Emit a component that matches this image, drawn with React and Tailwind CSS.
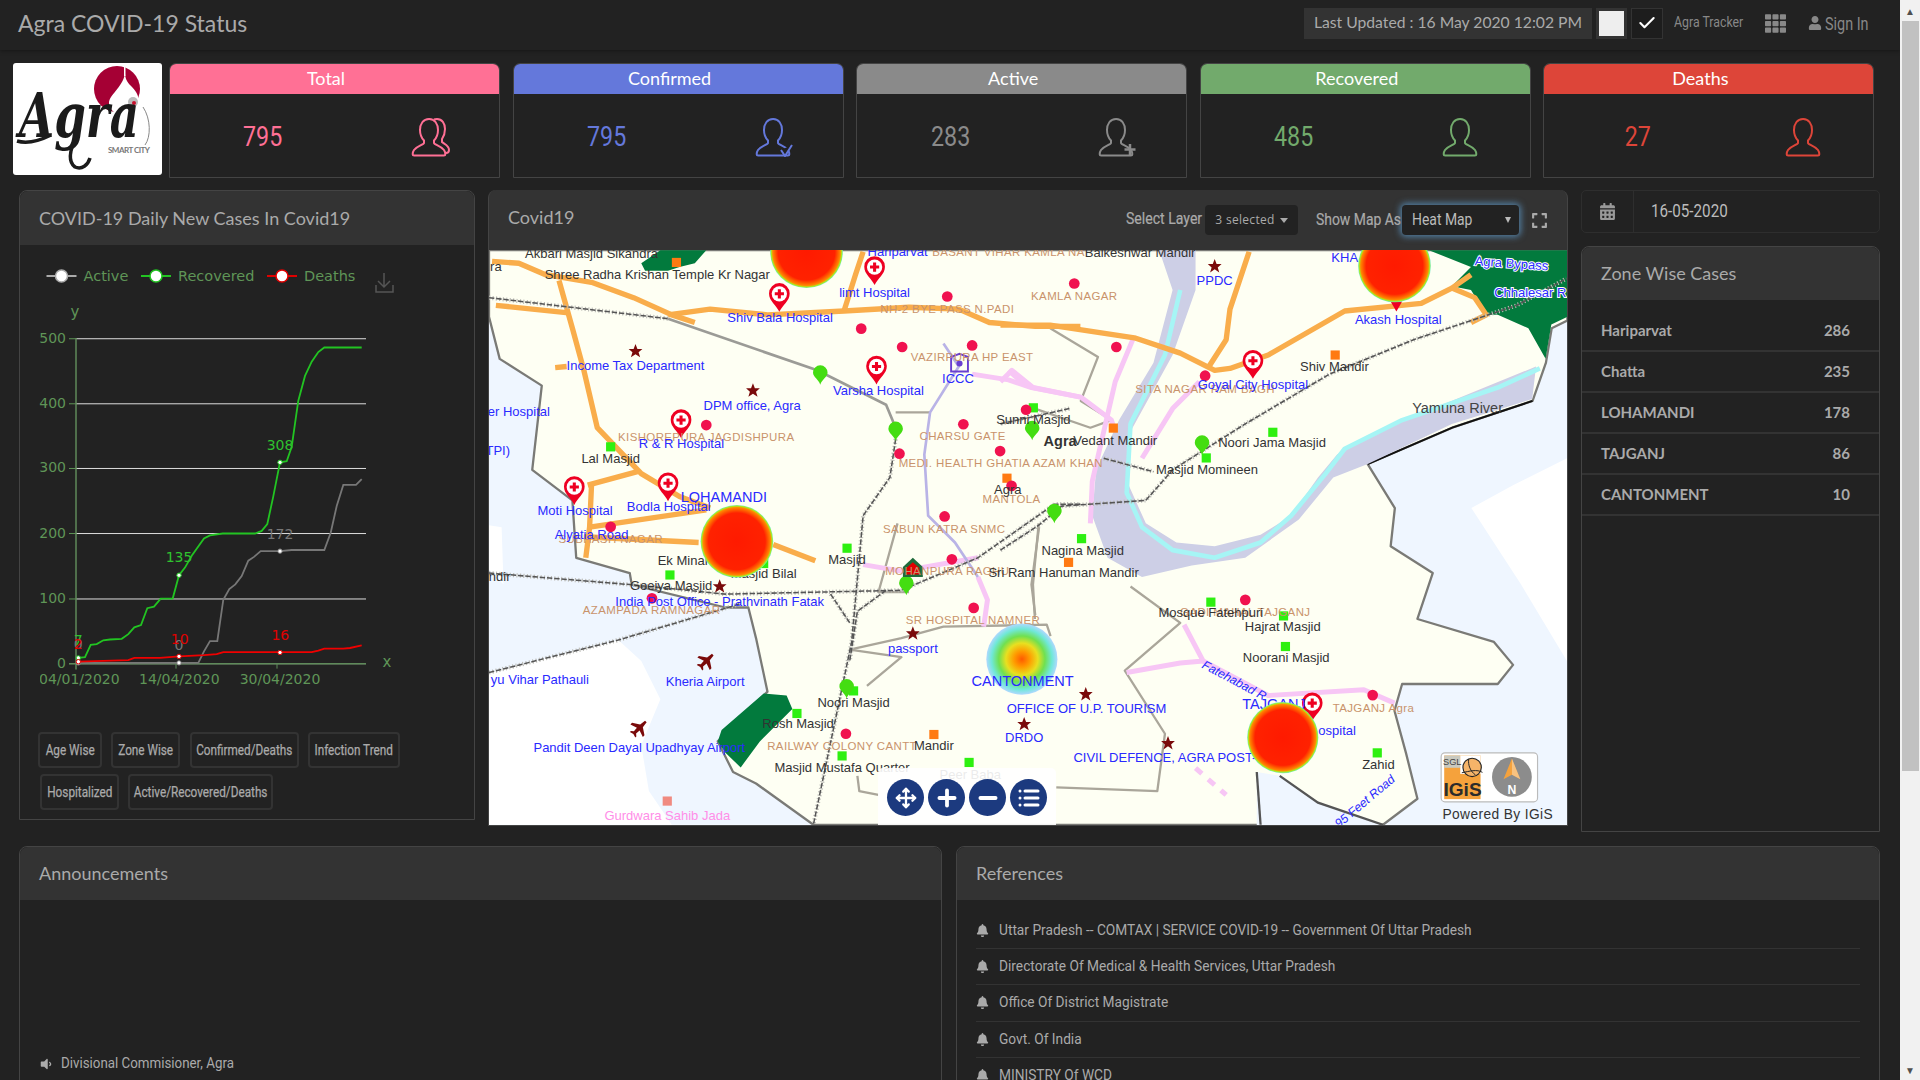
import React from 'react';
import { Move, Plus, Minus, List, Check } from 'lucide-react';
import { FaBell, FaCalendarAlt, FaExpand, FaTh, FaUser, FaVolumeDown } from 'react-icons/fa';

const roboto = "font-['Roboto',sans-serif]";
const lato = "font-['Lato',sans-serif]";

// ---- person icons on the tiles
const BUST = 'M19 2c-5.800 0-9 5-9 11 0 4.500 1.500 8 4 10.500v2.500c0 1.500-7 3-10 7-1 1.500-1.300 3-1.300 4 0 1 .5 1.500 1.500 1.500h29.600c1 0 1.500-.5 1.500-1.500 0-1 -.3-2.500-1.300-4-3-4-10-5.500-10-7v-2.500c2.500-2.500 4-6 4-10.500 0-6-3.200-11-8.800-11z';

const PersonIcon = ({ kind, color }) => (
  <svg width="42" height="40" viewBox="0 0 42 40" fill="none" stroke={color} strokeWidth="2">
    <path d={BUST} fill="#222" />
    {kind === 'total' && <path d="M24 2.500c1-.5 2-.5 3-.5 5 0 8 4.500 8 10 0 4-1 7-3 10v3c2 2 7 3 7 8 0 2-1 3-3 3" />}
    {kind === 'confirmed' && <path d="M27 33l4 6 7-11" stroke={color} fill="#222" />}
    {kind === 'active' && <path d="M33 27v11M27.500 32.500h11" strokeWidth="2.500" />}
  </svg>
);

const tiles = [
  { title: 'Total', value: '795', color: '#ff7095', kind: 'total', bg: 'bg-[#ff7095]', text: 'text-[#ff7095]' },
  { title: 'Confirmed', value: '795', color: '#6478db', kind: 'confirmed', bg: 'bg-[#6478db]', text: 'text-[#6478db]' },
  { title: 'Active', value: '283', color: '#8a8a8a', kind: 'active', bg: 'bg-[#8a8a8a]', text: 'text-[#8a8a8a]' },
  { title: 'Recovered', value: '485', color: '#72aa6c', kind: 'plain', bg: 'bg-[#72aa6c]', text: 'text-[#72aa6c]' },
  { title: 'Deaths', value: '27', color: '#dd4539', kind: 'plain', bg: 'bg-[#dd4539]', text: 'text-[#dd4539]' },
];

const Tile = ({ t }) => (
  <div className="w-[331px] h-[115px] rounded-t-[7px] border border-[#444] overflow-hidden">
    <div className={`${t.bg} ${lato} h-[30px] pr-[17px] text-center text-white text-[18px] leading-[28px]`}>{t.title}</div>
    <div className="flex items-center h-[84px]">
      <div className={`${t.text} ${roboto} w-[186px] text-center text-[28px] pt-[1px]`}>
        <span className="inline-block scale-x-[0.83]">{t.value}</span>
      </div>
      <div className="ml-[54px] mt-[2px]"><PersonIcon kind={t.kind} color={t.color} /></div>
    </div>
  </div>
);

const Logo = () => (
  <div className="w-[149px] h-[112px] rounded-[3px] bg-white overflow-hidden shrink-0">
    <svg width="149" height="112" viewBox="0 0 149 112">
      <circle cx="104" cy="26" r="23" fill="#a50034" />
      <path d="M112 11c.5 6 3 9 7 13 5 5 8 11 6 18-1 4-4 7-6 9h-15c-5-3-8-6-8-11 0-8 13-15 16-29z" fill="#fff" />
      <rect x="111" y="3" width="1.500" height="10" fill="#fff" />
      <circle cx="120" cy="39" r="5" fill="#bbb" />
      <circle cx="121" cy="40" r="2" fill="#c8102e" />
      <path d="M130 44c8 12 8 30 2 38" stroke="#888" fill="none" />
      <text x="6" y="74" fontFamily="'DejaVu Serif',serif" fontStyle="italic" fontWeight="700" fontSize="62" fill="#1b1b1b" textLength="120" lengthAdjust="spacingAndGlyphs">Agra</text>
      <path d="M4 78c10 3 22 0 34-6M64 72c-6 12-10 26-2 32 7 3 13-2 15-9" stroke="#1b1b1b" strokeWidth="3.500" fill="none" />
      <text x="95" y="90" fontFamily="'Lato',sans-serif" fontWeight="700" fontSize="8" fill="#777" textLength="42">SMART CITY</text>
    </svg>
  </div>
);

// ---- chart. points are read in a 3 / 2.613 scaled space, toX/toY bring them into the svg
const toX = (x) => x / 3 - 20;
const toY = (y) => 240 + y / 2.613 - 245;
const line = (pts) => pts.map(([x, y]) => `${toX(x).toFixed(1)},${toY(y).toFixed(1)}`).join(' ');

const greenLine = [[235,1092],[255,1090],[272,1058],[290,1056],[310,1046],[330,1044],[365,1042],[385,1030],[403,1012],[423,1006],[442,962],[462,958],[482,937],[518,937],[537,876],[555,856],[575,825],[612,780],[630,772],[668,767],[765,767],[785,760],[802,742],[820,670],[840,581],[860,578],[875,540],[885,480],[895,420],[915,355],[935,318],[955,293],[973,281],[1085,281]];
const grayLine = [[235,1105],[595,1105],[612,1075],[630,1048],[652,1048],[670,940],[688,912],[706,900],[725,878],[745,838],[762,828],[782,813],[840,813],[875,810],[973,810],[992,765],[1010,695],[1030,640],[1068,640],[1085,625]];
const redLine = [[235,1102],[385,1098],[403,1092],[480,1092],[537,1088],[612,1085],[650,1082],[670,1077],[935,1077],[955,1073],[973,1068],[1030,1068],[1050,1066],[1085,1059]];

const grid = [[500, 258], [400, 428], [300, 597], [200, 767], [100, 938], [0, 1107]];

const chartLabels = [
  ['7', 235, 1058, '#2fc22f'], ['0', 235, 1070, '#777'], ['2', 235, 1070, '#e00000'],
  ['135', 537, 842, '#2fc22f'], ['0', 537, 1072, '#777'], ['10', 539, 1056, '#e00000'],
  ['308', 840, 549, '#2fc22f'], ['172', 840, 780, '#777'], ['16', 841, 1046, '#e00000'],
];

const markers = [
  [235, 1092, '#22c422'], [537, 876, '#22c422'], [840, 581, '#22c422'],
  [235, 1105, '#777'], [537, 1105, '#777'], [840, 813, '#777'],
  [235, 1102, '#e00000'], [537, 1088, '#e00000'], [840, 1078, '#e00000'],
];

const LegendItem = ({ x, label, color }) => (
  <g>
    <line x1={x - 15} x2={x + 15} y1="31" y2="31" stroke={color} strokeWidth="2" />
    <circle cx={x} cy="31" r="6" fill="#fff" stroke={color} strokeWidth="1.500" />
    <text x={x + 22} y="36" fill="#5f9557" fontSize="14.500">{label}</text>
  </g>
);

const Chart = () => (
  <svg width="453" height="478" viewBox="0 0 453 478" fontFamily="'DejaVu Sans',sans-serif" className="block">
    <defs>
      <clipPath id="axisClip"><rect x="20" y="400" width="420" height="60" /></clipPath>
    </defs>
    <LegendItem x={41.500} label="Active" color="#aaa" />
    <LegendItem x={136} label="Recovered" color="#22c422" />
    <LegendItem x={262} label="Deaths" color="#e00000" />
    <path d="M364 28v14M358 36l6 6 6-6M356 40v7h17v-7" stroke="#555" strokeWidth="1.500" fill="none" />
    <text x="55" y="72" fill="#5f9557" fontSize="15" textAnchor="middle">y</text>
    {grid.map(([v, y]) => (
      <g key={v}>
        <line x1="56" x2="346" y1={toY(y)} y2={toY(y)} stroke="#ddd" strokeWidth="1" />
        <line x1="49" x2="56" y1={toY(y)} y2={toY(y)} stroke="#5f9557" />
        <text x="46" y={toY(y) + 4} fill="#5f9557" fontSize="14" textAnchor="end">{v}</text>
      </g>
    ))}
    <line x1="56" x2="56" y1={toY(256)} y2={toY(1122)} stroke="#5f8a5a" strokeWidth="1.500" />
    <line x1="49" x2="346" y1={toY(1107)} y2={toY(1107)} stroke="#5f8a5a" strokeWidth="1.500" />
    <line x1="156" x2="156" y1={toY(1107)} y2={toY(1120)} stroke="#5f8a5a" />
    <line x1="257" x2="257" y1={toY(1107)} y2={toY(1120)} stroke="#5f8a5a" />
    <g clipPath="url(#axisClip)" fill="#5f9557" fontSize="14" textAnchor="middle">
      <text x={toX(238)} y={toY(1160)}>04/01/2020</text>
      <text x={toX(538)} y={toY(1160)}>14/04/2020</text>
      <text x={toX(840)} y={toY(1160)}>30/04/2020</text>
    </g>
    <text x="367" y={toY(1116)} fill="#5f9557" fontSize="15" textAnchor="middle">x</text>
    <polyline points={line(grayLine)} fill="none" stroke="#777" strokeWidth="1.800" />
    <polyline points={line(greenLine)} fill="none" stroke="#22c422" strokeWidth="1.800" />
    <polyline points={line(redLine)} fill="none" stroke="#f00000" strokeWidth="1.800" />
    {markers.map(([x, y, c], i) => (
      <circle key={i} cx={toX(x)} cy={toY(y)} r="2.200" fill="#fff" stroke={c} strokeWidth="1" />
    ))}
    {chartLabels.map(([t, x, y, c], i) => (
      <text key={i} x={toX(x)} y={toY(y)} fill={c} fontSize="14" textAnchor="middle">{t}</text>
    ))}
  </svg>
);

const ChartButton = ({ className, children }) => (
  <div className={`${className} ${roboto} h-[36px] flex items-center justify-center rounded-[4px] border-2 border-[#333] text-[14px] text-[#aaa] [-webkit-text-stroke:0.25px_#aaa]`}>
    <span className="inline-block whitespace-nowrap scale-x-[0.84]">{children}</span>
  </div>
);

// ---- map, everything in it is in a space 2.613 times the page
const roadsLeft = [
  '30,55 100,60 170,90 290,110 400,150 500,195 560,215',
  '40,170 230,190',
  '205,105 240,230 270,340 305,490 420,610 520,670 600,700',
  '490,195 600,180 750,195 950,185 1120,175 1250,180 1330,215 1450,225 1568,225',
  '950,185 980,90 1000,30',
  '280,640 410,605',
  '290,640 285,750 275,830',
  '285,750 590,705',
  '270,775 570,790',
  '765,795 875,838',
  '195,333 225,330',
];
const roadsRight = [
  '0,222 130,222 350,255 470,295 560,340 600,335 700,300 900,185 1100,165 1180,125 1230,90',
  '1180,125 1240,150 1270,195 1230,215',
  '650,30 600,180 590,260 545,330',
];
const pinkLeft = [
  '1285,350 1380,365 1440,385 1568,410',
  '1380,340 1420,375',
  '1000,848 1100,865 1300,830',
  '1300,880 1325,940 1315,1010',
];
const pinkRight = [
  '0,370 30,340 85,385 210,410 290,470 300,500',
  '370,570 450,440 520,370',
  '350,250 300,370 240,630 235,740',
  '480,1005 530,1100 470,1105 330,1130',
  '530,1100 700,1190 950,1175 1030,1210',
];
const grayLeft = [
  '965,1070 1100,1040 1210,1010 1480,1005 1490,1035',
  '1085,450 1175,450',
  '1460,750 1440,900 1450,980',
  '965,1070 1100,1090 1010,1165',
  '1120,920 1040,920 1090,740',
  '985,1400 990,1440 1040,1450',
];
const grayRight = [
  '130,230 255,305 210,420 290,470 235,490 90,440',
  '340,905 470,1000 325,1125 430,1290 410,1440 146,1430',
  '100,740 85,900 90,990',
];
const railLeft = [
  '22,150 490,205',
  '22,870 390,900 640,925 1100,915 1300,830 1500,690 1568,690',
  '1085,520 1070,620 1000,720 970,1050 870,1528',
  '22,1130 360,1045 680,950',
  '915,925 965,1000',
  '1060,915 985,970 965,1100',
];
const railRight = [
  '0,810 100,745 160,695 380,680 450,600 640,480 860,350 1080,260 1350,170 1480,100',
  '180,440 0,480',
  '270,570 400,605',
];

const blueLeft = [
  ['limt Hospital', 1030, 149], ['Shiv Bala Hospital', 783, 214], ['Income Tax Department', 405, 339], ['DPM office, Agra', 710, 443],
  ['Varsha Hospital', 1040, 404], ['ICCC', 1248, 374], ['R & R Hospital', 525, 544], ['er Hospital', 100, 460], ['TPI)', 45, 561],
  ['Moti Hospital', 247, 718], ['Bodla Hospital', 492, 708], ['Alyatia Road', 290, 781], ['India Post Office - Prathvinath Fatak', 625, 956],
  ['yu Vihar Pathauli', 155, 1161], ['Kheria Airport', 587, 1166], ['Pandit Deen Dayal Upadhyay Airport', 415, 1339], ['passport', 1130, 1078],
  ['DRDO', 1421, 1312], ['Hariparvat', 1090, 41],
];
const blueRight = [
  ['PPDC', 560, 116], ['Akash Hospital', 1040, 218], ['Goyal City Hospital', 660, 388],
  ['OFFICE OF U.P. TOURISM', 225, 1237], ['CIVIL DEFENCE, AGRA POST-', 430, 1365], ['ospital', 880, 1293], ['KHA', 900, 56],
];
const darkLeft = [
  ['Akbari Masjid Sikandra', 290, 46], ['Shree Radha Krishan Temple Kr Nagar', 462, 100], ['Lal Masjid', 340, 581], ['Ek Minar', 530, 849],
  ['Masjid Bilal', 740, 884], ['Goeiya Masjid', 498, 914], ['Masjid', 958, 845], ['Noori Masjid', 975, 1221], ['Rosh Masjid', 830, 1276],
  ['Masjid Mustafa Quarter', 945, 1391], ['Mandir', 1185, 1333], ['Sunni Masjid', 1445, 479], ['Agra', 1378, 663], ['ndir', 50, 891], ['ra', 40, 81],
];
const darkRight = [
  ['Nagina Masjid', 215, 823], ['Sri Ram Hanuman Mandir', 165, 881], ['Vedant Mandir', 300, 534], ['Noori Jama Masjid', 710, 541],
  ['Masjid Momineen', 540, 610], ['Shiv Mandir', 873, 341], ['Mosque Fatehpuri', 550, 986], ['Hajrat Masjid', 738, 1022],
  ['Noorani Masjid', 747, 1103], ['Zahid', 988, 1381], ['Baikeshwar Mandir', 365, 43],
];
const brownLeft = [
  ['BASANT VIHAR KAMLA NA', 1380, 41], ['NH-2 BYE PASS N.PADI', 1220, 189], ['VAZIRPURA HP  EAST', 1285, 316], ['KISHOREPURA JAGDISHPURA', 590, 525],
  ['CHARSU GATE', 1260, 523], ['MEDI. HEALTH GHATIA AZAM KHAN', 1360, 594], ['MANTOLA', 1388, 686], ['SABUN  KATRA SNMC', 1212, 764],
  ['MOHANPURA RAGHU', 1220, 876], ['SR HOSPITAL NAMNER', 1287, 1003], ['AZAMPADA RAMNAGAR', 447, 976], ['SUBHASH NAGAR', 340, 791],
  ['RAILWAY COLONY CANTT', 945, 1333],
];
const brownRight = [
  ['KAMLA NAGAR', 193, 157], ['SITA NAGAR RAM BAGH', 535, 398], ['GADI MAHAL TAJGANJ', 640, 983], ['TAJGANJ Agra', 975, 1233],
];

const circlesLeft = [[1220,147],[1552,113],[995,231],[1102,279],[1285,275],[590,483],[1262,481],[1426,443],[1095,558],[1358,551],[1388,642],[1213,722],[340,749],[1232,834],[448,936],[1289,961],[955,1290]];
const circlesRight = [[303,279],[535,354],[640,940],[973,1189]];
const greenSquares = [[340,540],[495,875],[958,805],[740,845],[827,1237],[945,1348],[1277,1365],[975,1178],[1445,438],[1571,780],[2071,502],[1897,569],[1909,946],[2099,982],[2104,1062],[2344,1340]];
const orangeSquares = [[512,58],[1376,622],[1185,1292],[1537,842],[2234,300],[1654,491]];
const greenPins = [[888,350],[1085,497],[1442,495],[1500,712],[1113,900],[957,1170],[1886,533]];
const stars = [[405,290],[712,393],[625,905],[1130,1028],[1421,1265],[1919,68],[1582,1187],[1797,1315]];
const hospitalPins = [[1030,75],[781,145],[1035,335],[524,475],[490,640],[245,650],[2019,320],[2174,1215]];

const Lines = ({ items, stroke, width, dash }) => items.map((p, i) => (
  <polyline key={i} points={p} fill="none" stroke={stroke} strokeWidth={width} strokeDasharray={dash} strokeLinejoin="round" />
));

const Labels = ({ items, fill, size, spacing }) => items.map(([t, x, y]) => (
  <text key={t} x={x} y={y} fill={fill} fontSize={size} textAnchor="middle" letterSpacing={spacing}>{t}</text>
));

const HospitalPin = ({ x, y }) => (
  <g transform={`translate(${x} ${y})`}>
    <path d="M0 42C-8 24-27 14-27-6a27 27 0 0 1 54 0C27 14 8 24 0 42z" fill="#ee0022" />
    <circle r="20" cy="-5" fill="#fff" />
    <path d="M-4-17h8v8h8v8h-8v8h-8v-8h-8v-8h8z" fill="#ee0022" />
  </g>
);

const Heat = ({ x, y, r = 95 }) => <circle cx={x} cy={y} r={r} fill="url(#hotSpot)" />;

const MapCanvas = () => (
  <svg width="1078" height="575" viewBox="22 26 2818 1502" fontFamily="'Liberation Sans',sans-serif" className="block">
    <defs>
      <radialGradient id="hotSpot">
        <stop offset="0%" stopColor="#ff1a00" />
        <stop offset="78%" stopColor="#ff2200" />
        <stop offset="93%" stopColor="#ff8800" />
        <stop offset="97%" stopColor="#a8ee20" />
        <stop offset="100%" stopColor="#70e8c0" />
      </radialGradient>
      <radialGradient id="coolSpot">
        <stop offset="0%" stopColor="#ff5a00" />
        <stop offset="22%" stopColor="#ff9a00" />
        <stop offset="45%" stopColor="#e8e020" />
        <stop offset="65%" stopColor="#70e050" />
        <stop offset="85%" stopColor="#70e8d8" />
        <stop offset="100%" stopColor="#b0d8ff" />
      </radialGradient>
    </defs>

    {/* outside the district */}
    <rect x="22" y="26" width="2818" height="1502" fill="#eff6ff" />
    <polygon points="22,745 55,750 60,900 22,860" fill="#fff" />
    <polygon points="22,1130 360,1045 420,1100 470,1200 420,1320 440,1440 500,1528 22,1528" fill="#fff" />
    <polygon points="2590,700 2700,640 2840,570 2840,1100 2720,900" fill="#fff" />

    {/* district land */}
    <polygon
      fill="#fefff3"
      stroke="#7a7a76"
      strokeWidth="6"
      strokeLinejoin="round"
      points="22,26 2841,26 2841,210 2800,230 2785,320 2750,420 2540,490 2319,585 2390,700 2379,800 2489,870 2449,990 2649,1050 2699,1110 2659,1160 2409,1160 2389,1230 2419,1340 2449,1460 2359,1528 870,1528 720,1420 660,1390 620,1310 750,1180 720,1040 700,960 640,960 395,900 390,870 250,830 240,680 135,600 160,380 50,310 22,200"
    />
    <polygon points="2029,1390 2089,1400 2189,1470 2359,1530 2029,1530" fill="#eff6ff" />
    <polyline points="2029,1390 2039,1528" fill="none" stroke="#555" strokeWidth="6" />
    <polyline points="2089,1400 2189,1470 2359,1528" fill="none" stroke="#555" strokeWidth="6" />
    <polyline points="2319,585 2540,490 2750,420" fill="none" stroke="#111" strokeWidth="5" />

    {/* river and forest */}
    <polygon fill="#cdcfe6" points="1774,26 1869,26 1869,130 1809,300 1699,500 1694,640 1739,740 1819,790 1919,800 2039,770 2119,720 2189,620 2239,560 2319,510 2759,330 2749,415 2539,480 2319,585 2229,620 2139,730 1999,830 1859,850 1729,880 1639,830 1599,720 1609,600 1669,470 1759,320 1809,130" />
    <polyline points="1829,130 1789,300 1699,480 1689,660 1729,750 1809,810 1919,830 2039,790 2119,720 2209,610 2259,545 2409,470 2659,385 2769,335" fill="none" stroke="#a6f5f5" strokeWidth="12" strokeLinejoin="round" />
    <polygon fill="#027a3d" points="420,60 470,26 590,26 560,60 520,70 490,80 430,80" />
    <polygon fill="#027a3d" points="630,1280 740,1185 800,1190 815,1225 730,1310 680,1378 640,1340 620,1310" />
    <polygon fill="#027a3d" points="2479,26 2841,26 2841,200 2799,220 2784,310 2739,230 2659,195 2629,195 2589,130 2539,120 2589,70" />

    {/* roads */}
    <Lines items={grayLeft} stroke="#aaa69a" width="6" />
    <g transform="translate(1359 0)"><Lines items={grayRight} stroke="#aaa69a" width="6" /></g>
    <Lines items={pinkLeft} stroke="#f7c6f5" width="13" />
    <g transform="translate(1359 0)">
      <Lines items={pinkRight} stroke="#f7c6f5" width="13" />
      <polyline points="510,1380 590,1450" fill="none" stroke="#f7c6f5" strokeWidth="13" strokeDasharray="22 22" />
    </g>
    <Lines items={roadsLeft} stroke="#f9ad4b" width="14" />
    <g transform="translate(1359 0)"><Lines items={roadsRight} stroke="#f9ad4b" width="14" /></g>
    <polyline points="1210,270 1250,330 1175,450 1160,560 1170,720 1240,790 1300,880" fill="none" stroke="#b9b3e6" strokeWidth="7" />
    <polyline points="490,205 880,340 1060,430 1085,490" fill="none" stroke="#9b9b96" strokeWidth="7" />
    <Lines items={railLeft} stroke="#bdbdb8" width="11" dash="3 6" />
    <g transform="translate(1359 0)"><Lines items={railRight} stroke="#bdbdb8" width="11" dash="3 6" /></g>
    <Lines items={railLeft} stroke="#555" width="4" dash="14 5" />
    <g transform="translate(1359 0)"><Lines items={railRight} stroke="#555" width="4" dash="14 5" /></g>

    {/* point markers */}
    {greenSquares.map(([x, y], i) => <rect key={i} x={x - 12} y={y - 12} width="24" height="24" fill="#2ef010" />)}
    {orangeSquares.map(([x, y], i) => <rect key={i} x={x - 12} y={y - 12} width="24" height="24" fill="#ff7a12" />)}
    <rect x="476" y="1454" width="24" height="24" fill="#f08a80" />
    {circlesLeft.map(([x, y], i) => <circle key={i} cx={x} cy={y} r="14" fill="#f0124f" />)}
    {circlesRight.map(([x, y], i) => <circle key={i} cx={x + 1359} cy={y} r="14" fill="#f0124f" />)}
    {greenPins.map(([x, y], i) => (
      <path key={i} transform={`translate(${x} ${y})`} d="M0 28C-4 14-19 8-19-4a19 19 0 0 1 38 0C19 8 4 14 0 28z" fill="#44dd11" />
    ))}
    {stars.map(([x, y], i) => (
      <polygon key={i} transform={`translate(${x} ${y})`} points="0,-19 5,-6 18,-6 8,3 12,16 0,8 -12,16 -8,3 -18,-6 -5,-6" fill="#7a0a0a" />
    ))}
    {[[590, 1100], [415, 1275]].map(([x, y], i) => (
      <path key={i} transform={`translate(${x} ${y}) rotate(45)`} d="M-3-24h6l2 16 18 12v6l-18-6-1 12 6 5v4l-10-3-10 3v-4l6-5-1-12-18 6v-6l18-12z" fill="#7a0a0a" />
    ))}
    <path d="M1130 830l26 24v26h-52v-26z" fill="#1f6b3a" />
    <path d="M1130 842l17 15v17h-34v-17z" fill="#e00000" />
    <path d="M1230 305l22-8 22 8v38h-44z" fill="none" stroke="#6a3fd0" strokeWidth="5" />
    <circle cx="1252" cy="322" r="8" fill="#6a3fd0" />
    <path d="M2379 160h30l-15 26z" fill="#ee0022" />
    {hospitalPins.map(([x, y], i) => <HospitalPin key={i} x={x} y={y} />)}

    {/* labels */}
    <Labels items={brownLeft} fill="#c9936b" size="30" spacing="1" />
    <g transform="translate(1359 0)"><Labels items={brownRight} fill="#c9936b" size="30" spacing="1" /></g>
    <Labels items={darkLeft} fill="#333" size="34" />
    <g transform="translate(1359 0)"><Labels items={darkRight} fill="#333" size="34" /></g>
    <text x="1515" y="538" fill="#333" fontSize="38" fontWeight="700" textAnchor="middle">Agra</text>
    <text x="2554" y="452" fill="#444" fontSize="38" textAnchor="middle">Yamuna River</text>
    <text x="1280" y="1408" fill="#333" fontSize="34" textAnchor="middle">Peer Baba</text>
    <Heat x={852} y={30} />
    <Heat x={670} y={787} />
    <Heat x={2389} y={67} />
    <circle cx="1415" cy="1095" r="93" fill="url(#coolSpot)" />
    <Labels items={blueLeft} fill="#2a2aff" size="34" />
    <g transform="translate(1359 0)"><Labels items={blueRight} fill="#2a2aff" size="34" /></g>
    <text x="636" y="685" fill="#2a2aff" fontSize="38" textAnchor="middle">LOHAMANDI</text>
    <text x="1417" y="1164" fill="#2a2aff" fontSize="38" textAnchor="middle">CANTONMENT</text>
    <text x="2074" y="1226" fill="#2a2aff" fontSize="38" textAnchor="middle">TAJGANJ</text>
    <text x="488" y="1515" fill="#ff8ee8" fontSize="34" textAnchor="middle">Gurdwara Sahib Jada</text>
    <text fill="#2a2aff" fontSize="32" fontStyle="italic" textAnchor="middle" transform="translate(1965 1160) rotate(28)">Fatehabad R</text>
    <text fill="#2a2aff" fontSize="32" fontStyle="italic" textAnchor="middle" transform="translate(2318 1475) rotate(-40)">95 Feet Road</text>
    <text fill="#2a2aff" stroke="#fff" strokeWidth="5" paintOrder="stroke" fontSize="34" textAnchor="middle" transform="translate(2694 72) rotate(4)">Agra Bypass</text>
    <text x="2744" y="149" fill="#2a2aff" stroke="#fff" strokeWidth="5" paintOrder="stroke" fontSize="34" textAnchor="middle">Chhalesar R</text>
    <Heat x={2097} y={1300} r={93} />

    {/* IGiS badge */}
    <g transform="translate(1359 0)">
      <rect x="1152" y="1340" width="252" height="128" rx="10" fill="#fff" stroke="#bbb" strokeWidth="3" />
      <rect x="1160" y="1347" width="95" height="114" fill="#f5a23c" />
      <rect x="1160" y="1347" width="42" height="32" fill="#c9c9bf" />
      <rect x="1202" y="1347" width="53" height="48" fill="#fff" />
      <text x="1181" y="1372" fill="#444" fontSize="24" textAnchor="middle">SGL</text>
      <circle cx="1233" cy="1378" r="24" fill="#f5b469" stroke="#222" strokeWidth="3" />
      <path d="M1206 1392c20-4 40-10 54-1M1224 1356c-2 16 4 32 18 42" stroke="#222" strokeWidth="2.500" fill="none" />
      <text x="1208" y="1453" fill="#2b2b2b" fontSize="50" fontWeight="700" textAnchor="middle">IGiS</text>
      <circle cx="1337" cy="1403" r="52" fill="#8c8c8c" />
      <path d="M1337 1355l22 54-22-12-22 12z" fill="#f5a23c" />
      <path d="M1337 1355l22 54-22-12z" fill="#fff" opacity=".35" />
      <text x="1337" y="1447" fill="#fff" fontSize="32" fontWeight="700" textAnchor="middle">N</text>
      <text x="1300" y="1513" fill="#333" fontSize="36" textAnchor="middle" letterSpacing="1">Powered By IGiS</text>
    </g>
  </svg>
);

const MapTool = ({ children }) => (
  <div className="w-[37px] h-[37px] rounded-full bg-[#1c3a7f] text-white flex items-center justify-center">{children}</div>
);

const PanelHead = ({ className, children }) => (
  <div className={`${className} ${lato} bg-[#333] rounded-t-[8px] flex items-center px-[19px] text-[18px] text-[#aaa]`}>{children}</div>
);

const zones = [
  ['Hariparvat', 286], ['Chatta', 235], ['LOHAMANDI', 178], ['TAJGANJ', 86], ['CANTONMENT', 10],
];

const references = [
  'Uttar Pradesh -- COMTAX | SERVICE COVID-19 -- Government Of Uttar Pradesh',
  'Directorate Of Medical & Health Services, Uttar Pradesh',
  'Office Of District Magistrate',
  'Govt. Of India',
  'MINISTRY Of WCD',
];

const Scrollbar = () => (
  <div className="w-[20px] h-full bg-[#f1f1f1] flex flex-col items-center shrink-0">
    <div className="h-[21px] flex items-center justify-center text-[10px] leading-none text-[#505050]">▲</div>
    <div className="w-[17px] h-[750px] bg-[#c1c1c1]" />
    <div className="mt-auto h-[21px] flex items-center justify-center text-[10px] leading-none text-[#505050]">▼</div>
  </div>
);

export default function App() {
  return (
    <div className="flex w-[1920px] h-screen overflow-hidden bg-[#222]">
      <div className="flex-1 min-w-0 overflow-hidden">
        {/* top bar */}
        <header className="h-[50px] flex items-center pl-[18px] pb-[4px] shadow-[0_1px_4px_rgba(0,0,0,0.35)]">
          <h1 className={`${lato} text-[23px] text-[#aaa]`}>Agra COVID-19 Status</h1>
          <div className="ml-auto flex items-center">
            <div className={`${lato} w-[288px] h-[31px] bg-[#333] flex items-center justify-center text-[15.700px] text-[#aaa]`}>Last Updated : 16 May 2020 12:02 PM</div>
            <div className="ml-[4px] w-[31px] h-[31px] bg-[#333] flex items-center justify-center">
              <div className="w-[25px] h-[25px] bg-[#eee]" />
            </div>
            <div className="ml-[4px] w-[32px] h-[31px] bg-[#1d1d1d] border border-[#333] flex items-center justify-center text-white">
              <Check size={20} strokeWidth={2.500} />
            </div>
            <div className={`${roboto} ml-[11px] w-[71px] text-[14.500px] text-[#888]`}>
              <span className="inline-block origin-left scale-x-[0.85] whitespace-nowrap">Agra Tracker</span>
            </div>
            <FaTh size={21} className="ml-[20px] text-[#888]" />
            <FaUser size={14} className="ml-[22px] text-[#888]" />
            <div className={`${roboto} ml-[3px] w-[44px] mr-[31px] text-[18px] text-[#888]`}>
              <span className="inline-block origin-left scale-x-[0.8] whitespace-nowrap">Sign In</span>
            </div>
          </div>
        </header>

        {/* counters */}
        <div className="flex mt-[13px] pl-[13px]">
          <Logo />
          <div className="flex gap-[12.600px] ml-[7px]">
            {tiles.map((t) => <Tile key={t.title} t={t} />)}
          </div>
        </div>

        {/* chart, map and zones */}
        <div className="flex items-start gap-[13px] mt-[12px] pl-[19px]">
          <section className="w-[456px] h-[630px] rounded-t-[8px] border border-[#444] shrink-0">
            <PanelHead className="h-[54px]">COVID-19 Daily New Cases In Covid19</PanelHead>
            <Chart />
            <div className="flex gap-[9.300px] pl-[18px] mt-[9px]">
              <ChartButton className="w-[64px]">Age Wise</ChartButton>
              <ChartButton className="w-[69px]">Zone Wise</ChartButton>
              <ChartButton className="w-[109px]">Confirmed/Deaths</ChartButton>
              <ChartButton className="w-[92px]">Infection Trend</ChartButton>
            </div>
            <div className="flex gap-[9.300px] pl-[20px] mt-[6px]">
              <ChartButton className="w-[79px]">Hospitalized</ChartButton>
              <ChartButton className="w-[145px]">Active/Recovered/Deaths</ChartButton>
            </div>
          </section>

          <section className="w-[1080px] h-[636px] rounded-t-[8px] border-x border-b border-[#444] bg-[#333] shrink-0">
            <div className="h-[60px] flex items-center px-[19px]">
              <span className={`${lato} -mt-[5px] text-[18px] text-[#aaa]`}>Covid19</span>
              <div className={`${roboto} ml-auto -mt-[3px] w-[75px] text-[16px] text-[#aaa] [-webkit-text-stroke:0.2px_#aaa]`}>
                <span className="inline-block origin-left scale-x-[0.88] whitespace-nowrap">Select Layer</span>
              </div>
              <div className="ml-[4px] w-[93px] h-[30px] rounded-[4px] bg-[#222] flex items-center justify-center gap-[5px] text-[12px] tracking-[0.3px] text-[#aaa] font-['Open_Sans',sans-serif]">
                3 selected
                <span className="w-0 h-0 border-x-[4px] border-x-transparent border-t-[5px] border-t-[#aaa]" />
              </div>
              <div className={`${roboto} ml-[18px] w-[83px] text-[16px] text-[#aaa] [-webkit-text-stroke:0.2px_#aaa]`}>
                <span className="inline-block origin-left scale-x-[0.87] whitespace-nowrap">Show Map As</span>
              </div>
              <div className={`${roboto} ml-[3px] w-[117px] h-[30px] rounded-[4px] bg-[#222] flex items-center justify-between pl-[10px] pr-[8px] text-[16px] text-[#bbb] shadow-[0_0_6px_2px_rgba(102,175,233,0.6)]`}>
                <span className="inline-block origin-left scale-x-[0.87] whitespace-nowrap">Heat Map</span>
                <span className="w-0 h-0 border-x-[3px] border-x-transparent border-t-[6px] border-t-[#bbb]" />
              </div>
              <FaExpand size={17} className="ml-[12px] text-[#aaa]" />
            </div>
            <div className="relative h-[575px] bg-white">
              <MapCanvas />
              <div className="absolute left-[389px] bottom-0 w-[178px] h-[57px] rounded-t-[5px] bg-white/90 flex items-center justify-center gap-[4px] pt-[2px]">
                <MapTool><Move size={22} strokeWidth={2.500} /></MapTool>
                <MapTool><Plus size={26} strokeWidth={3.500} /></MapTool>
                <MapTool><Minus size={26} strokeWidth={3.500} /></MapTool>
                <MapTool><List size={24} strokeWidth={3} /></MapTool>
              </div>
            </div>
          </section>

          <div className="w-[299px] shrink-0">
            <div className="h-[43px] rounded-[5px] border border-[#2e2e2e] flex items-center">
              <div className="w-[52px] h-full border-r border-[#2e2e2e] flex items-center justify-center text-[#999]">
                <FaCalendarAlt size={17} />
              </div>
              <div className={`${roboto} ml-[17px] w-[80px] text-[19px] text-[#bbb]`}>
                <span className="inline-block origin-left scale-x-[0.8] whitespace-nowrap">16-05-2020</span>
              </div>
            </div>
            <section className="mt-[13px] h-[586px] rounded-t-[8px] border border-[#444]">
              <PanelHead className="h-[53px]">Zone Wise Cases</PanelHead>
              <div className="pt-[11px]">
                {zones.map(([name, n]) => (
                  <div key={name} className={`${lato} h-[41px] border-b-2 border-[#333] flex items-center justify-between pl-[19px] pr-[29px] text-[15px] font-bold text-[#aaa]`}>
                    <span>{name}</span>
                    <span>{n}</span>
                  </div>
                ))}
              </div>
            </section>
          </div>
        </div>

        {/* announcements and references */}
        <div className="flex gap-[14px] mt-[14px] pl-[19px]">
          <section className="w-[923px] h-[300px] rounded-t-[8px] border border-[#444] shrink-0">
            <PanelHead className="h-[53px]">Announcements</PanelHead>
            <div className={`${roboto} flex items-center pt-[152px] pl-[19px] text-[15.500px] text-[#aaa]`}>
              <FaVolumeDown size={14} />
              <span className="ml-[8px] inline-block origin-left scale-x-[0.86] whitespace-nowrap">Divisional Commisioner, Agra</span>
            </div>
          </section>
          <section className="w-[924px] h-[300px] rounded-t-[8px] border border-[#444] shrink-0">
            <PanelHead className="h-[53px]">References</PanelHead>
            <ul className="px-[19px] pt-[13px]">
              {references.map((r) => (
                <li key={r} className={`${roboto} h-[36.200px] border-b border-[#333] flex items-center text-[15.500px] text-[#aaa]`}>
                  <FaBell size={13} className="shrink-0" />
                  <span className="ml-[10px] inline-block origin-left scale-x-[0.885] whitespace-nowrap">{r}</span>
                </li>
              ))}
            </ul>
          </section>
        </div>
      </div>
      <Scrollbar />
    </div>
  );
}
